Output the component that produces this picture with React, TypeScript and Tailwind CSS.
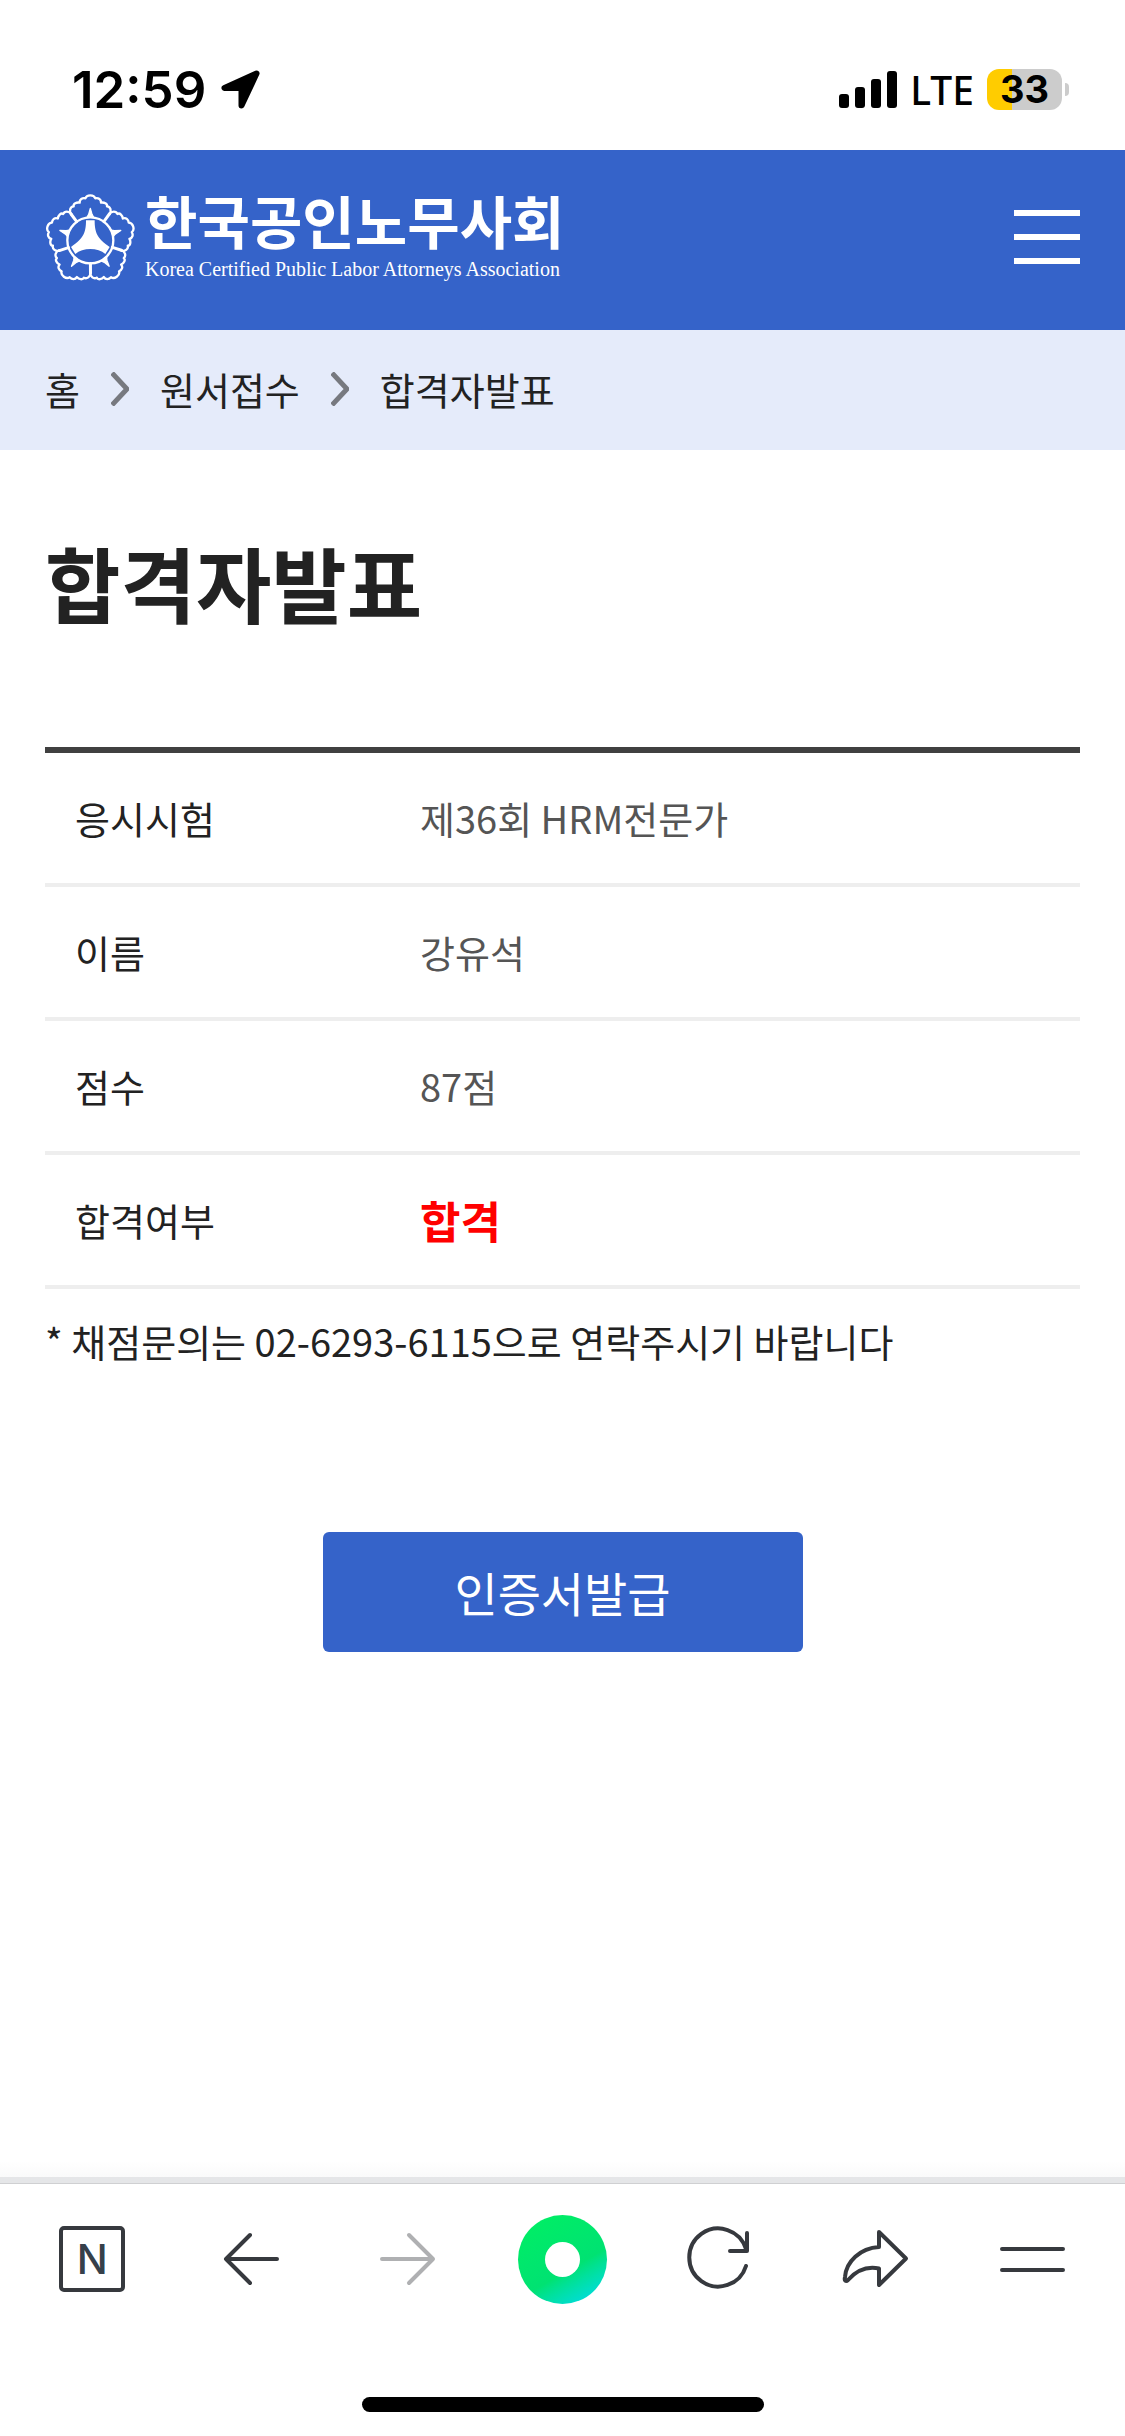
import React from "react";

const PETAL_ANGLES = [0, 72, 144, 216, 288];

function Emblem() {
  return (
    <svg viewBox="75 73 270 261" className="h-[87px] w-[90px] shrink-0" aria-hidden="true">
      <g fill="none" stroke="#fff" strokeWidth="7" strokeLinejoin="round" strokeLinecap="round">
        <circle cx="211" cy="212" r="69" />
        {PETAL_ANGLES.map((angle) => (
          <g key={angle} transform={`rotate(${angle} 211 212)`}>
            <path d="M153 133C147 124 150 111 161 110C159 102 170 97 179 99C178 89 187 84 196 86C200 74 222 74 226 86C235 84 244 89 243 99C252 97 263 102 261 110C272 111 275 124 269 133" />
            <path d="M153 133L170 156" strokeWidth="9" />
            <path d="M211 116L216 134L221 143H201L206 134Z" fill="#fff" strokeWidth="4" />
          </g>
        ))}
      </g>
      <path
        fill="#fff"
        d="M198 152H224C224 187 230 206 269 232L256 253C234 233 188 233 166 253L153 232C192 206 198 187 198 152Z"
      />
    </svg>
  );
}

function StatusBar() {
  return (
    <div className="flex h-[150px] items-center justify-between pl-[72px] pr-14 pt-[28px] font-['Inter',sans-serif] text-black">
      <div className="flex items-center gap-[15px]">
        <span className="text-[51px] font-semibold leading-none">12:59</span>
        <svg viewBox="0 0 39 39" className="size-[39px]" aria-hidden="true">
          <path
            d="M35.5 3.5L3.5 18H20.5V35.5Z"
            fill="#000"
            stroke="#000"
            strokeWidth="6"
            strokeLinejoin="round"
          />
        </svg>
      </div>
      <div className="flex items-center">
        <div className="flex h-[37px] items-end gap-[6px]">
          <span className="h-[14px] w-[10px] rounded-[3px] bg-black" />
          <span className="h-[21px] w-[10px] rounded-[3px] bg-black" />
          <span className="h-[29px] w-[10px] rounded-[3px] bg-black" />
          <span className="h-[37px] w-[10px] rounded-[3px] bg-black" />
        </div>
        <span className="mx-[13px] font-['Noto_Sans',sans-serif] text-[39px] font-medium leading-none">
          LTE
        </span>
        <div className="flex h-[41px] w-[75px] items-center justify-center rounded-[12px] bg-linear-to-r from-[#ffcc00] from-33% to-[#cccccc] to-33% text-[38px] font-bold leading-none">
          33
        </div>
        <span className="ml-[3px] h-[13px] w-1 rounded-r-full bg-[#cccccc]" />
      </div>
    </div>
  );
}

function Header() {
  return (
    <header className="flex h-[180px] items-center justify-between bg-[#3563c9] px-[45px] pb-[6px]">
      <a href="#home" className="flex items-center gap-[10px] text-white">
        <Emblem />
        <span className="flex flex-col gap-[12px]">
          <span className="text-[57px] font-bold leading-[52px]">한국공인노무사회</span>
          <span className="font-['Liberation_Serif',serif] text-[20px] leading-[24px]">
            Korea Certified Public Labor Attorneys Association
          </span>
        </span>
      </a>
      <button type="button" aria-label="메뉴" className="flex w-[66px] flex-col gap-[18px]">
        <span className="h-[6px] bg-white" />
        <span className="h-[6px] bg-white" />
        <span className="h-[6px] bg-white" />
      </button>
    </header>
  );
}

function Separator() {
  return (
    <svg viewBox="0 0 18 34" className="h-[34px] w-[18px]" aria-hidden="true">
      <path d="M1 1L16 17L1 33" fill="none" stroke="#77797f" strokeWidth="5" />
    </svg>
  );
}

function Breadcrumb() {
  return (
    <nav
      aria-label="현재 위치"
      className="flex h-[120px] items-center gap-[31px] bg-[#e5ebfa] px-[45px] pb-[2px] text-[38px] leading-none text-[#222222]"
    >
      <a href="#home">홈</a>
      <Separator />
      <a href="#apply">원서접수</a>
      <Separator />
      <a href="#result" aria-current="page">
        합격자발표
      </a>
    </nav>
  );
}

const ROWS = [
  { label: "응시시험", value: "제36회 HRM전문가", passed: false },
  { label: "이름", value: "강유석", passed: false },
  { label: "점수", value: "87점", passed: false },
  { label: "합격여부", value: "합격", passed: true },
];

function ResultTable() {
  return (
    <table className="w-full table-fixed border-separate border-spacing-0 border-t-[6px] border-[#404040] text-[38px] leading-[56px]">
      <tbody>
        {ROWS.map((row) => (
          <tr key={row.label} className="h-[134px]">
            <th
              scope="row"
              className="w-1/3 border-b-4 border-[#eeeeee] pl-[30px] text-left font-normal text-[#222222]"
            >
              {row.label}
            </th>
            <td
              className={
                row.passed
                  ? "border-b-4 border-[#eeeeee] pl-[30px] text-[44px] font-bold text-[#ff0000]"
                  : "border-b-4 border-[#eeeeee] pl-[30px] text-[#555555]"
              }
            >
              {row.value}
            </td>
          </tr>
        ))}
      </tbody>
    </table>
  );
}

function LineIcon({ children, className }: { children: React.ReactNode; className?: string }) {
  return (
    <svg
      viewBox="0 0 68 68"
      className={className ?? "size-[68px] text-[#36393e]"}
      fill="none"
      stroke="currentColor"
      strokeWidth="4"
      strokeLinecap="round"
      strokeLinejoin="round"
      aria-hidden="true"
    >
      {children}
    </svg>
  );
}

function BrowserBar() {
  return (
    <footer>
      <div className="h-4 bg-linear-to-b from-white to-[#fafafa]" />
      <div className="h-[7px] border-b border-[#cfd0d2] bg-[#e5e6e8]" />
      <div className="grid h-[150px] grid-cols-7 place-items-center px-[14px]">
        <button
          type="button"
          aria-label="네이버 홈"
          className="flex size-[66px] items-center justify-center rounded-[5px] border-4 border-[#36393e] font-['Inter',sans-serif] text-[41px] font-medium leading-none text-[#36404a]"
        >
          N
        </button>
        <button type="button" aria-label="뒤로">
          <LineIcon>
            <path d="M35 10L11 34L35 58M11 34H62" />
          </LineIcon>
        </button>
        <button type="button" aria-label="앞으로">
          <LineIcon className="size-[68px] text-[#afb0b2]">
            <path d="M37 10L61 34L37 58M61 34H10" />
          </LineIcon>
        </button>
        <button
          type="button"
          aria-label="그린닷"
          className="flex size-[89px] items-center justify-center rounded-full bg-linear-150 from-[#00f062] via-[#00e272] via-60% to-[#00d8f8]"
        >
          <span className="size-[35px] rounded-full bg-white" />
        </button>
        <button type="button" aria-label="새로고침">
          <LineIcon>
            <path d="M61 41A29 29 0 1 1 61 24M62 8V26H45" />
          </LineIcon>
        </button>
        <button type="button" aria-label="공유">
          <LineIcon>
            <path d="M37 7L64 33.5L37 60V43.5C25 41 14 46 6 55C4 57 2 56 3 52C4 37 18 23 37 22Z" />
          </LineIcon>
        </button>
        <button type="button" aria-label="전체 메뉴">
          <LineIcon>
            <path d="M3 24H64M3 45H64" />
          </LineIcon>
        </button>
      </div>
      <div className="flex justify-center pb-6 pt-[63px]">
        <div className="h-[15px] w-[402px] rounded-full bg-black" />
      </div>
    </footer>
  );
}

export default function App() {
  return (
    <div className="flex min-h-screen flex-col bg-white font-['Noto_Sans_CJK_KR',sans-serif]">
      <StatusBar />
      <Header />
      <Breadcrumb />
      <main className="flex-1 px-[45px] pt-[72px]">
        <h1 className="mb-[105px] text-[82px] font-bold leading-[120px] text-[#222222]">
          합격자발표
        </h1>
        <ResultTable />
        <p className="mt-[24px] text-[38px] leading-[56px] text-[#222222]">
          * 채점문의는 02-6293-6115으로 연락주시기 바랍니다
        </p>
        <div className="mt-[163px] flex justify-center">
          <button
            type="button"
            className="h-[120px] w-[480px] rounded-[6px] bg-[#3563c9] pb-[2px] text-[47px] leading-none text-white"
          >
            인증서발급
          </button>
        </div>
      </main>
      <BrowserBar />
    </div>
  );
}
